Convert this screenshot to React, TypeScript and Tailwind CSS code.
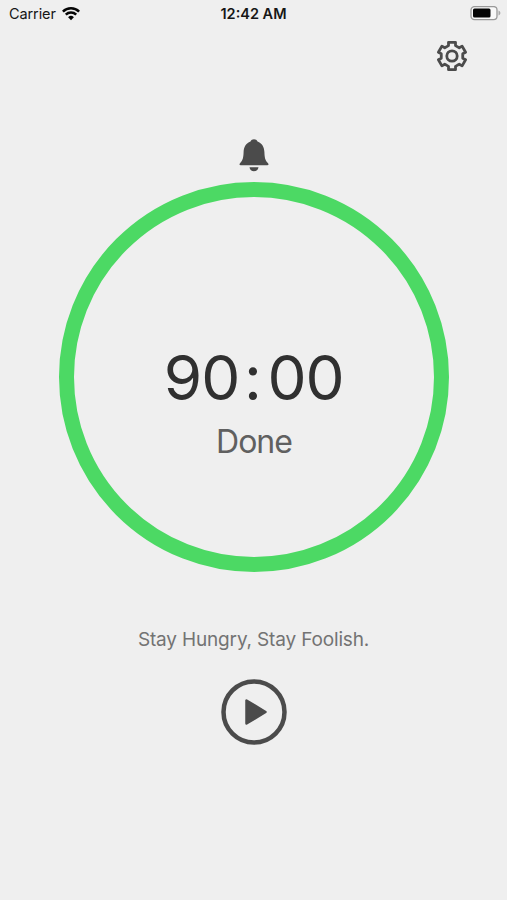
const teeth = [0, 60, 120, 180, 240, 300];

// Corners of a single gear tooth, pointing up, relative to the hub.
const tooth: [number, number][] = [
  [-6, -8.9],
  [-3.5, -10.4],
  [-3.5, -13.7],
  [3.5, -13.7],
  [3.5, -10.4],
  [6, -8.9],
];

const gearPoints = teeth
  .flatMap((deg) => {
    const a = (deg * Math.PI) / 180;
    return tooth.map(
      ([x, y]) =>
        `${(x * Math.cos(a) - y * Math.sin(a)).toFixed(2)},${(x * Math.sin(a) + y * Math.cos(a)).toFixed(2)}`,
    );
  })
  .join(" ");

function Wifi() {
  return (
    <svg className="ml-[6px] h-[14px] w-[18px]" viewBox="0 0 18 14" fill="none" stroke="#050505" strokeWidth="2.5">
      <path d="M.9 4.600a11.500 11.500 0 0 1 16.200 0" />
      <path d="M3.800 7.700a7.400 7.400 0 0 1 10.400 0" />
      <path d="M9 13.200 6.100 10.300a4.100 4.100 0 0 1 5.800 0Z" fill="#050505" stroke="none" />
    </svg>
  );
}

function Battery() {
  return (
    <svg className="h-[16px] w-[31px]" viewBox="0 0 31 16">
      <rect x="1" y=".6" width="26" height="13" rx="3.4" fill="#f8f8f8" stroke="#999" strokeWidth="1.3" />
      <rect x="3" y="2.600" width="17.5" height="9" rx="1.5" fill="#050505" />
      <path d="M28.500 4.600v5c1.200-.4 1.900-1.300 1.900-2.500s-.7-2.100-1.900-2.500Z" fill="#aaa" />
    </svg>
  );
}

function Gear() {
  return (
    <svg className="size-[32px]" viewBox="-16 -16 32 32" fill="none" stroke="#4b4b4b" strokeWidth="2.8" strokeLinejoin="round">
      <polygon points={gearPoints} />
      <circle r="5.2" />
    </svg>
  );
}

function Bell() {
  return (
    <svg className="h-[33px] w-[30px]" viewBox="0 0 30 33" fill="#4b4b4b">
      <path d="M15 .3c1.600 0 2.900.8 3.500 2.100 4.600 1.600 6.700 5.600 6.900 10.600.2 5.500.7 8 3.200 10.700.8.900 1 1.300.9 1.900-.1.500-.5.700-1.200.7H1.700c-.7 0-1.100-.2-1.200-.7-.1-.6.100-1 .9-1.900 2.500-2.700 3-5.200 3.200-10.700.2-5 2.300-9 6.900-10.600C12.100 1.100 13.400.3 15 .3Z" />
      <path d="M10.500 28.200h9c-.3 2.400-2.200 4.100-4.500 4.100s-4.200-1.700-4.500-4.100Z" />
    </svg>
  );
}

export default function App() {
  return (
    <main className="flex h-[900px] w-[507px] flex-col bg-[#efefef] font-['Inter',sans-serif]">
      <header className="grid h-[27px] grid-cols-3 items-center px-[6px]">
        <div className="flex items-center pl-[3px] text-[14.5px] tracking-[-0.1px] text-[#161616]">
          <span>Carrier</span>
          <Wifi />
        </div>
        <time className="text-center text-[14.5px] font-semibold whitespace-nowrap text-[#161616]">12:42 AM</time>
        <div className="flex justify-end">
          <Battery />
        </div>
      </header>

      <div className="flex justify-end pt-[13px] pr-[39px]">
        <button aria-label="Settings">
          <Gear />
        </button>
      </div>

      <section className="flex flex-col items-center pt-[67px]">
        <Bell />
        <div className="mt-[10px] ml-px flex size-[390px] flex-col items-center rounded-full border-[15px] border-[#4cd964] pt-[150px]">
          <div className="flex h-[62px] items-center text-[62px] leading-none text-[#303030]">
            <span className="flex w-[76px] justify-center tracking-[-1px]">90</span>
            <span className="flex w-[27px] justify-center">:</span>
            <span className="flex w-[78px] justify-center tracking-[-1px]">00</span>
          </div>
          <p className="mt-[15px] text-[32px] leading-[36px] tracking-[-1px] text-[#606060]">Done</p>
        </div>
      </section>

      <footer className="flex flex-col items-center pt-[55px]">
        <p className="text-[19px] leading-[26px] tracking-[-0.16px] text-[#737373]">Stay Hungry, Stay Foolish.</p>
        <button aria-label="Start" className="mt-[26px]">
          <svg className="size-[66px]" viewBox="0 0 66 66">
            <circle cx="33" cy="33" r="30.500" fill="none" stroke="#4b4b4b" strokeWidth="4.500" />
            <path d="M25.500 21.500v23l19-11.500Z" fill="#4b4b4b" stroke="#4b4b4b" strokeWidth="2.500" strokeLinejoin="round" />
          </svg>
        </button>
      </footer>
    </main>
  );
}
